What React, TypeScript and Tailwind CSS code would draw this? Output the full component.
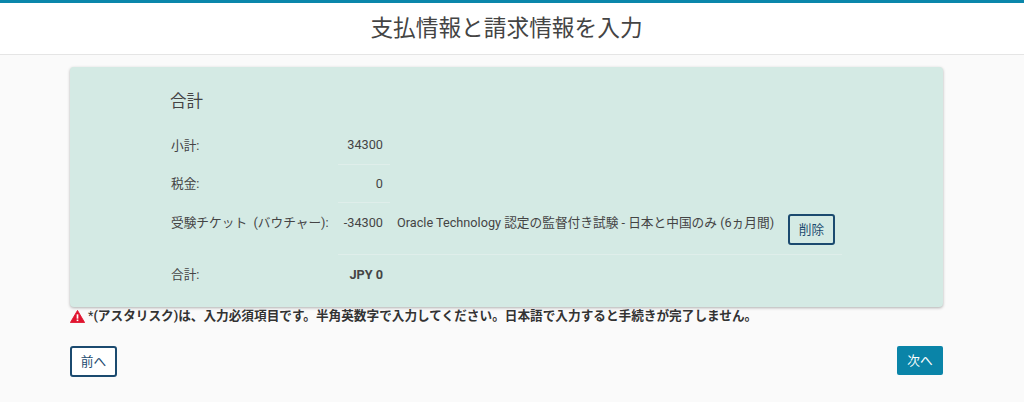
const font = '[font-family:Roboto,"Liberation_Sans","Noto_Sans_CJK_JP",sans-serif]';

const App = () => {
    return (
        <div className={`min-h-[402px] bg-[#fafafa] text-[#444] ${font}`}>
            <header className="h-[55px] border-t-[3px] border-b border-t-[#0a87ab] border-b-[#e5e5e5] bg-white text-center">
                <h1 className="pt-[9px] pr-[11px] text-[22.7px] leading-[34px] text-[#444]">支払情報と請求情報を入力</h1>
            </header>
            <main className="mx-[70px] w-[873px] pt-3">
                <div className="h-[240px] rounded bg-[#d4eae4] pl-[100px] pt-[24px] shadow-[0_1px_3px_rgba(0,0,0,0.3)]">
                    <h2 className="text-[16.5px] leading-[21px]">合計</h2>
                    <div className="mt-[14px] grid grid-cols-[168px_52px_392px_60px] text-[12.7px] leading-[18px]">
                        <div className="flex h-[39px] items-center pl-[1px]">小計:</div>
                        <div className="flex h-[39px] items-center justify-end border-b border-[#dfeeea] pr-[7px]">34300</div>
                        <div />
                        <div />
                        <div className="flex h-[38px] items-center pl-[1px]">税金:</div>
                        <div className="flex h-[38px] items-center justify-end border-b border-[#dfeeea] pr-[7px]">0</div>
                        <div />
                        <div />
                        <div className="h-[52px] whitespace-nowrap pl-[1px] pt-[11px]">受験チケット&nbsp;&nbsp;(バウチャー):</div>
                        <div className="h-[52px] border-b border-[#dfeeea] pt-[11px] pr-[7px] text-right">-34300</div>
                        <div className="h-[52px] whitespace-nowrap border-b border-[#dfeeea] pl-[7px] pt-[11px]">
                            Oracle Technology 認定の監督付き試験 - 日本と中国のみ (6ヵ月間)
                        </div>
                        <div className="h-[52px] border-b border-[#dfeeea] pl-[6px] pt-[11px]">
                            <button className="h-[31px] w-[47px] rounded-[3px] border-2 border-[#1b4a6f] text-[12.7px] text-[#1b4a6f]">削除</button>
                        </div>
                        <div className="flex h-[39px] items-center pl-[1px]">合計:</div>
                        <div className="flex h-[39px] items-center justify-end whitespace-nowrap pr-[7px] font-bold">JPY 0</div>
                    </div>
                </div>
                <p className="mt-[1px] flex h-[17px] items-center gap-[3px] whitespace-nowrap text-[12.65px] font-bold text-[#333]">
                    <svg viewBox="0 0 16 15" preserveAspectRatio="none" className="h-[13px] w-[15px]">
                        <path d="M8 0.5 L15.6 14.5 H0.4 Z" fill="#e0142f" stroke="#e0142f" strokeLinejoin="round" />
                        <rect x="7.1" y="5" width="1.8" height="5" fill="#fff" />
                        <rect x="7.1" y="11" width="1.8" height="1.8" fill="#fff" />
                    </svg>
                    <span><span className="font-normal">*</span>(アスタリスク)は、入力必須項目です。半角英数字で入力してください。日本語で入力すると手続きが完了しません。</span>
                </p>
                <div className="mt-[21px] flex items-start justify-between">
                    <button className="h-[31px] w-[47px] rounded-[3px] border-2 border-[#1b4a6f] bg-white text-[12.7px] text-[#1b4a6f]">前へ</button>
                    <button className="h-[29px] w-[46px] rounded-[2px] bg-[#0a84a8] text-[12.7px] text-white">次へ</button>
                </div>
            </main>
        </div>
    );
};

export default App;
